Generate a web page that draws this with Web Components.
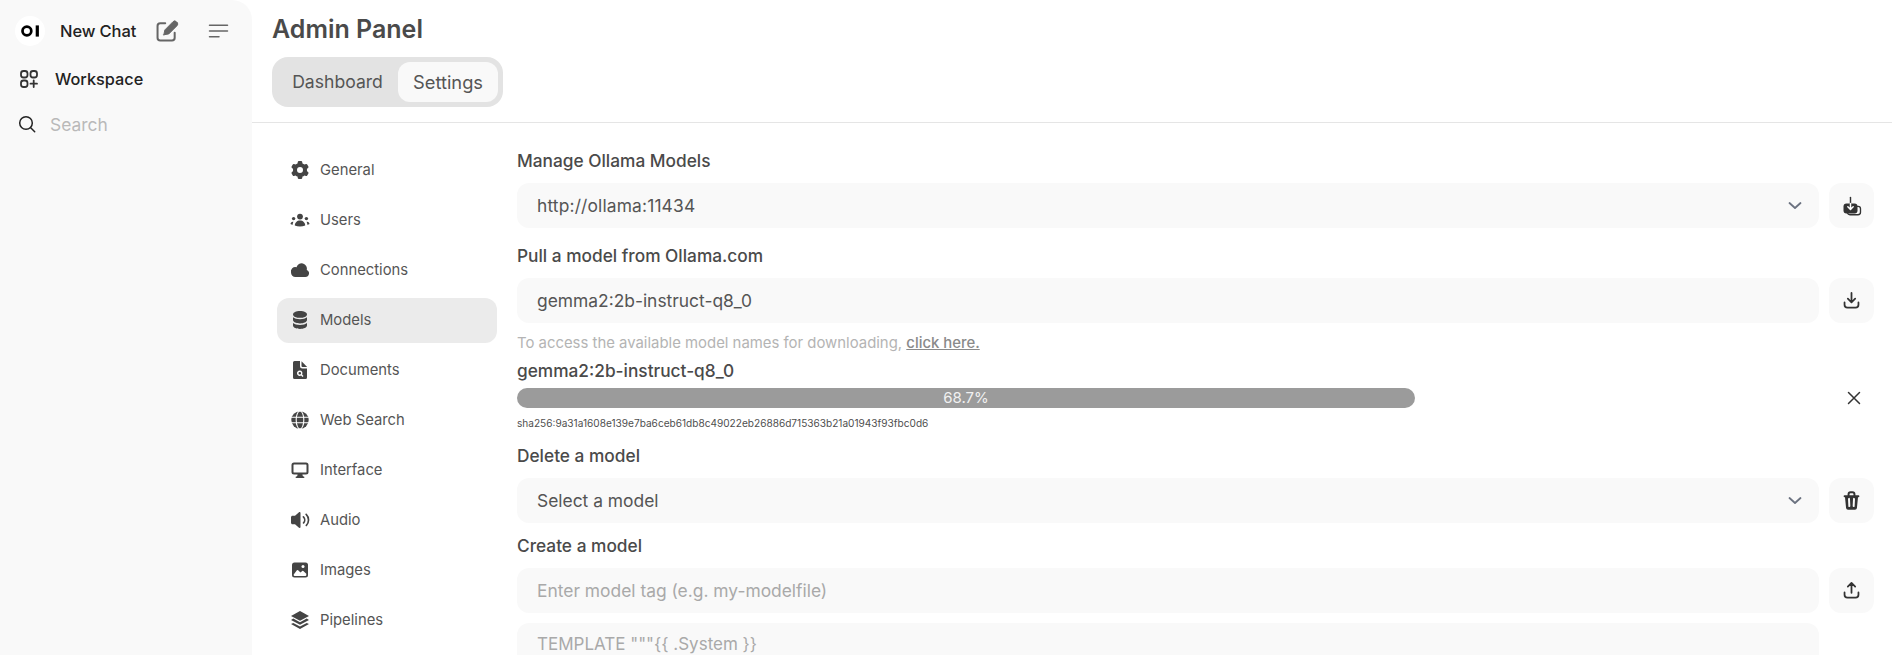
<!DOCTYPE html>
<html>
<head>
<meta charset="utf-8">
<title>Admin Panel</title>
<style>
    html, body { margin: 0; height: 100%; overflow: hidden; background: #fff; }
    body { font-family: Inter, "Noto Sans", sans-serif; color: #4a4a4a; }
</style>
</head>
<body>

<admin-app>
    <app-sidebar slot="sidebar"></app-sidebar>
    <admin-header slot="header"></admin-header>
    <settings-nav slot="nav">
        <nav-item label="General" icon="cog"></nav-item>
        <nav-item label="Users" icon="users"></nav-item>
        <nav-item label="Connections" icon="cloud"></nav-item>
        <nav-item label="Models" icon="database" active></nav-item>
        <nav-item label="Documents" icon="doc"></nav-item>
        <nav-item label="Web Search" icon="globe"></nav-item>
        <nav-item label="Interface" icon="monitor"></nav-item>
        <nav-item label="Audio" icon="speaker"></nav-item>
        <nav-item label="Images" icon="photo"></nav-item>
        <nav-item label="Pipelines" icon="stack"></nav-item>
    </settings-nav>
    <models-panel slot="content"></models-panel>
</admin-app>

<script>
const icons = {
    cog: '<svg viewBox="0 0 20 20" fill="currentColor"><path fill-rule="evenodd" clip-rule="evenodd" d="M7.84 1.804A1 1 0 0 1 8.82 1h2.36a1 1 0 0 1 .98.804l.331 1.652a6.993 6.993 0 0 1 1.929 1.115l1.598-.54a1 1 0 0 1 1.186.447l1.18 2.044a1 1 0 0 1-.205 1.251l-1.267 1.113a7.047 7.047 0 0 1 0 2.228l1.267 1.113a1 1 0 0 1 .206 1.25l-1.18 2.045a1 1 0 0 1-1.187.447l-1.598-.54a6.993 6.993 0 0 1-1.929 1.115l-.33 1.652a1 1 0 0 1-.98.804H8.82a1 1 0 0 1-.98-.804l-.331-1.652a6.993 6.993 0 0 1-1.929-1.115l-1.598.54a1 1 0 0 1-1.186-.447l-1.18-2.044a1 1 0 0 1 .205-1.251l1.267-1.114a7.05 7.05 0 0 1 0-2.227L1.821 7.773a1 1 0 0 1-.206-1.25l1.18-2.045a1 1 0 0 1 1.187-.447l1.598.54A6.992 6.992 0 0 1 7.51 3.456l.33-1.652ZM10 13a3 3 0 1 0 0-6 3 3 0 0 0 0 6Z"/></svg>',
    users: '<svg viewBox="0 0 20 20" fill="currentColor"><circle cx="10" cy="6.6" r="2.9"/><circle cx="3.6" cy="8.6" r="1.7"/><circle cx="16.4" cy="8.6" r="1.7"/><path d="M4.8 15.6c0-3.2 2.3-5.2 5.2-5.2s5.2 2 5.2 5.2c-1.5.7-3.3 1-5.2 1s-3.7-.3-5.2-1Z"/><path d="M3.4 11.7c-.5 1-.7 1.9-.7 3-.9-.1-1.6-.3-2.2-.6 0-1.7 1.2-2.7 2.9-2.4ZM16.6 11.7c.5 1 .7 1.9.7 3 .9-.1 1.6-.3 2.2-.6 0-1.7-1.2-2.7-2.9-2.4Z"/></svg>',
    cloud: '<svg viewBox="0 0 20 20" fill="currentColor"><path d="M1 12.6A4.4 4.4 0 0 0 5.4 17H15.3a3.7 3.7 0 0 0 1.5-7.1 5.3 5.3 0 0 0-10.3-2.6A4.4 4.4 0 0 0 1 12.6Z"/></svg>',
    database: '<svg viewBox="0 0 20 20" fill="currentColor"><path d="M10 1c3.900 0 7 1.500 7 3.400S13.900 7.800 10 7.800 3 6.300 3 4.400 6.100 1 10 1Z"/><path d="M3 7.300c1.500 1.300 4 2 7 2s5.500-.7 7-2v2.700c0 1.900-3.100 3.400-7 3.400S3 11.900 3 10V7.300Z"/><path d="M3 12.900c1.500 1.300 4 2 7 2s5.500-.7 7-2v2.700c0 1.900-3.100 3.400-7 3.400s-7-1.500-7-3.400v-2.700Z"/></svg>',
    doc: '<svg viewBox="0 0 20 20" fill="currentColor"><path fill-rule="evenodd" clip-rule="evenodd" d="M4.5 1A1.500 1.500 0 0 0 3 2.500v15A1.500 1.500 0 0 0 4.500 19h11a1.500 1.500 0 0 0 1.500-1.500V8.500h-4.500A2.500 2.500 0 0 1 10 6V1H4.500ZM9.800 10.500a2.700 2.700 0 1 0 1.300 5l1.400 1.400 1-1-1.400-1.400a2.700 2.700 0 0 0-2.300-4Zm0 1.400a1.300 1.300 0 1 1 0 2.600 1.300 1.300 0 0 1 0-2.600Z"/><path d="M11.500 1.300V6a1 1 0 0 0 1 1h4.700l-5.700-5.700Z"/></svg>',
    globe: '<svg viewBox="0 0 20 20"><circle cx="10" cy="10" r="8.700" fill="currentColor"/><g fill="none" stroke="#fff" stroke-width="1.100"><ellipse cx="10" cy="10" rx="3.800" ry="9"/><path d="M1 7.200h18M1 12.800h18"/></g></svg>',
    monitor: '<svg viewBox="0 0 20 20" fill="currentColor"><path fill-rule="evenodd" clip-rule="evenodd" d="M4 2.500A2.500 2.500 0 0 0 1.500 5v7A2.500 2.500 0 0 0 4 14.500h3.600l-.3 1.200c-.1.400-.5.800-1 .8a.75.75 0 0 0 0 1.500h7.400a.75.75 0 0 0 0-1.500c-.5 0-.9-.4-1-.8l-.3-1.200H16a2.500 2.500 0 0 0 2.500-2.500V5A2.500 2.500 0 0 0 16 2.500H4Zm0 2h12a.5.5 0 0 1 .5.500v7a.5.5 0 0 1-.5.500H4a.5.5 0 0 1-.5-.5V5a.5.5 0 0 1 .5-.5Z"/></svg>',
    speaker: '<svg viewBox="0 0 20 20" fill="currentColor"><path d="M10.500 3c0-.8-.9-1.200-1.500-.7L5 5.800H2.500C1.700 5.800 1 6.500 1 7.300v5.400c0 .8.700 1.500 1.500 1.500H5l4 3.500c.6.500 1.500.1 1.500-.7V3Z"/><path d="M12.800 6.300a.9.900 0 0 1 1.200 0 5.200 5.200 0 0 1 0 7.400.9.900 0 0 1-1.200-1.200 3.500 3.500 0 0 0 0-5 .9.900 0 0 1 0-1.200Z"/><path d="M15.600 3.800a.9.900 0 0 1 1.200 0 8.800 8.800 0 0 1 0 12.400.9.900 0 0 1-1.200-1.200 7 7 0 0 0 0-10 .9.900 0 0 1 0-1.200Z"/></svg>',
    photo: '<svg viewBox="0 0 20 20"><rect x="2" y="2.500" width="16" height="15" rx="2.500" fill="currentColor"/><path fill="#fff" d="M3.700 14.600V15a1 1 0 0 0 1 1h10.600a1 1 0 0 0 1-1v-1.300l-3-2.800a.8.8 0 0 0-1.100 0l-1.700 1.600-2.400-2.300a.9.9 0 0 0-1.200 0l-3.200 4.400Z"/><circle cx="13" cy="6.500" r="1.500" fill="#fff"/></svg>',
    stack: '<svg viewBox="0 0 20 20" fill="currentColor"><path d="M10 1 1 5.900l9 4.900 9-4.900L10 1Z"/><path d="M3.300 8.600 1 9.900l9 4.900 9-4.900-2.300-1.300L10 12.300 3.300 8.600Z"/><path d="M3.300 12.900 1 14.100 10 19l9-4.900-2.300-1.200L10 16.500l-6.700-3.600Z"/></svg>'
};

const actionIcons = {
    pullFrom: '<svg viewBox="0 0 24 24" width="20" height="20" fill="none"><path d="M18 12.500h1.400a2.800 2.800 0 0 1 2.800 2.800v4.200a3 3 0 0 1-3 3H9.500a3.200 3.200 0 0 1-3-2.300" stroke="currentColor" stroke-width="1.600"/><rect x="1.800" y="9" width="16.800" height="12" rx="3.500" fill="currentColor"/><path d="M10.200 1.800V9" stroke="currentColor" stroke-width="1.700" stroke-linecap="round"/><path d="M10.200 9v7M7 13l3.200 3.200 3.200-3.200" stroke="#fff" stroke-width="1.800" stroke-linecap="round" stroke-linejoin="round"/></svg>',
    download: '<svg viewBox="0 0 16 16" width="21" height="21" fill="none" stroke="currentColor" stroke-width="1.350" stroke-linecap="round" stroke-linejoin="round"><path d="M8 2.200v7.100M5.200 6.600 8 9.400l2.800-2.800"/><path d="M2.700 9.500v1.800a2.200 2.200 0 0 0 2.200 2.200h6.200a2.200 2.200 0 0 0 2.200-2.200V9.500"/></svg>',
    upload: '<svg viewBox="0 0 16 16" width="21" height="21" fill="none" stroke="currentColor" stroke-width="1.350" stroke-linecap="round" stroke-linejoin="round"><path d="M8 9.800V2.200M5.200 5 8 2.200 10.800 5"/><path d="M2.700 9.500v1.800a2.200 2.200 0 0 0 2.200 2.200h6.200a2.200 2.200 0 0 0 2.200-2.200V9.500"/></svg>',
    trash: '<svg viewBox="0 0 16 16" width="21" height="21" fill="currentColor"><path fill-rule="evenodd" clip-rule="evenodd" d="M5 3.250V4H2.750a.75.75 0 0 0 0 1.500h.3l.815 8.150A1.500 1.500 0 0 0 5.357 15h5.285a1.500 1.500 0 0 0 1.493-1.350l.815-8.150h.3a.75.75 0 0 0 0-1.500H11v-.75A2.250 2.250 0 0 0 8.750 1h-1.500A2.250 2.250 0 0 0 5 3.250Zm2.250-.75a.75.75 0 0 0-.75.750V4h3v-.75a.75.75 0 0 0-.75-.75h-1.500ZM6.050 6a.75.75 0 0 1 .787.713l.275 5.500a.75.75 0 0 1-1.498.075l-.275-5.500A.75.75 0 0 1 6.050 6Zm3.900 0a.75.75 0 0 1 .712.787l-.275 5.500a.75.750 0 0 1-1.498-.075l.275-5.500A.75.75 0 0 1 9.950 6Z"/></svg>'
};

class AdminApp extends HTMLElement {
    constructor() {
        super();
        this.attachShadow({ mode: 'open' });
        this.shadowRoot.innerHTML = `
            <style>
                :host { display: flex; height: 655px; overflow: hidden; }
                .main { flex: 1; min-width: 0; display: flex; flex-direction: column; }
                .body { display: flex; flex: 1; min-height: 0; padding: 25px 18px 0 25px; gap: 20px; overflow: hidden; }
                ::slotted([slot="content"]) { flex: 1; min-width: 0; }
            </style>
            <slot name="sidebar"></slot>
            <div class="main">
                <slot name="header"></slot>
                <div class="body">
                    <slot name="nav"></slot>
                    <slot name="content"></slot>
                </div>
            </div>
        `;
    }
}

class AppSidebar extends HTMLElement {
    constructor() {
        super();
        this.attachShadow({ mode: 'open' });
        this.shadowRoot.innerHTML = `
            <style>
                :host { display: block; width: 252px; flex: none; height: 655px; background: #f9f9f9; border-radius: 0 20px 0 0; box-sizing: border-box; padding: 16px 0 0 15px; }
                .top { display: flex; align-items: center; height: 30px; }
                .logo { width: 30px; height: 30px; border-radius: 50%; background: #fff; display: flex; align-items: center; justify-content: center; flex: none; }
                .new { margin-left: 15px; font-size: 16.5px; font-weight: 500; color: #222; letter-spacing: -.1px; width: 93.5px; white-space: nowrap; flex: none; }
                .ic { display: block; flex: none; }
                .menu { margin-left: 27px; }
                .row { display: flex; align-items: center; }
                .work { margin-top: 18px; height: 30px; padding-left: 4px; color: #222; font-size: 16.3px; font-weight: 500; }
                .work span { margin-left: 16px; }
                .search { margin-top: 15px; height: 30px; padding-left: 3px; }
                .search span { margin-left: 14px; font-size: 17.4px; color: #b9b9b9; }
            </style>
            <div class="top">
                <div class="logo">
                    <svg width="18" height="12" viewBox="0 0 18 12"><circle cx="5.900" cy="6" r="4.400" fill="none" stroke="#000" stroke-width="2.700"/><rect x="14.700" y=".4" width="3.200" height="11.200" fill="#000"/></svg>
                </div>
                <div class="new">New Chat</div>
                <svg class="ic" width="26" height="26" viewBox="0 0 22 22" fill="none" stroke="#666" stroke-width="1.700" stroke-linecap="round" stroke-linejoin="round"><path d="M17.500 12.500v4.200a2.300 2.300 0 0 1-2.300 2.300H5.300A2.300 2.300 0 0 1 3 16.700V6.800a2.300 2.300 0 0 1 2.300-2.300h4.200"/><path fill="#666" stroke-width=".8" d="M8.300 14.200l.9-4.100 6.900-7a2 2 0 0 1 2.800 0l.6.600a2 2 0 0 1 0 2.800l-7 7-4.200.7Z"/></svg>
                <svg class="ic menu" width="22" height="22" viewBox="0 0 22 22" fill="none" stroke="#666" stroke-width="1.500" stroke-linecap="round"><path d="M2.500 5.200h18M2.500 11h18M2.500 16.800h9.500"/></svg>
            </div>
            <div class="row work">
                <svg width="20" height="20" viewBox="0 0 20 20" fill="none" stroke="#333" stroke-width="1.800" stroke-linecap="round" stroke-linejoin="round"><rect x="2" y="2" width="6.500" height="6.500" rx="2.500"/><rect x="11.500" y="2" width="6.500" height="6.500" rx="2.500"/><rect x="2" y="11.500" width="6.500" height="6.500" rx="2.500"/><path d="M14.700 11.500v6.500M11.500 14.700H18"/></svg>
                <span>Workspace</span>
            </div>
            <div class="row search">
                <svg width="18" height="18" viewBox="0 0 18 18" fill="none" stroke="#222" stroke-width="1.500" stroke-linecap="round"><circle cx="8" cy="8" r="6.300"/><path d="m12.700 12.700 4 4"/></svg>
                <span>Search</span>
            </div>
        `;
    }
}

class AdminHeader extends HTMLElement {
    constructor() {
        super();
        this.attachShadow({ mode: 'open' });
        this.shadowRoot.innerHTML = `
            <style>
                :host { display: block; height: 123px; box-sizing: border-box; border-bottom: 1px solid #e5e5e5; padding: 13px 0 0 20px; }
                h1 { margin: 0; font-size: 25px; line-height: 32px; font-weight: 600; color: #4a4a4a; }
                .tabs { display: inline-flex; margin-top: 12px; padding: 5px; background: #e3e3e3; border-radius: 16px; }
                .tab { height: 39px; padding-bottom: 1px; display: flex; align-items: center; justify-content: center; border-radius: 12px; color: #555; }
                .tab.dash { width: 121px; font-size: 17.6px; }
                .tab.on { width: 100px; background: #f9f9f9; font-size: 18.3px; }
            </style>
            <h1>Admin Panel</h1>
            <div class="tabs">
                <div class="tab dash">Dashboard</div>
                <div class="tab on">Settings</div>
            </div>
        `;
    }
}

class SettingsNav extends HTMLElement {
    constructor() {
        super();
        this.attachShadow({ mode: 'open' });
        this.shadowRoot.innerHTML = `
            <style>
                :host { display: flex; flex-direction: column; gap: 5px; width: 220px; flex: none; }
            </style>
            <slot></slot>
        `;
    }
}

class NavItem extends HTMLElement {
    constructor() {
        super();
        this.attachShadow({ mode: 'open' });
        this.shadowRoot.innerHTML = `
            <style>
                :host { display: flex; align-items: center; height: 44px; padding: 0 0 1px 13px; border-radius: 12px; font-size: 14.8px; color: #555; }
                :host([active]) { background: #ebebeb; }
                .icon { width: 20px; height: 20px; margin-right: 10px; flex: none; color: #444; }
                .icon svg { display: block; width: 20px; height: 20px; }
            </style>
            <div class="icon"></div>
            <span></span>
        `;
    }
    connectedCallback() {
        this.shadowRoot.querySelector('span').textContent = this.getAttribute('label');
        this.shadowRoot.querySelector('.icon').innerHTML = icons[this.getAttribute('icon')] || '';
    }
}

class FieldBox extends HTMLElement {
    constructor() {
        super();
        this.attachShadow({ mode: 'open' });
        this.shadowRoot.innerHTML = `
            <style>
                :host { display: flex; align-items: center; height: 45px; flex: 1; min-width: 0; box-sizing: border-box; padding: 0 20px; background: #f9f9f9; border-radius: 12px; font-size: 17.4px; color: #555; }
                :host([placeholder]) { color: #a9a9a9; }
                span { flex: 1; }
                svg { display: none; color: #6b7280; }
                :host([select]) svg { display: block; margin-right: -6px; }
            </style>
            <span><slot></slot></span>
            <svg width="20" height="20" viewBox="0 0 20 20" fill="none" stroke="currentColor" stroke-width="1.800" stroke-linecap="round" stroke-linejoin="round"><path d="M4.500 7 10 12l5.500-5"/></svg>
        `;
    }
}

class IconButton extends HTMLElement {
    constructor() {
        super();
        this.attachShadow({ mode: 'open' });
        this.shadowRoot.innerHTML = `
            <style>
                :host { display: flex; align-items: center; justify-content: center; width: 45px; height: 45px; flex: none; background: #f9f9f9; border-radius: 12px; color: #333; }
                svg { display: block; }
            </style>
        `;
    }
    connectedCallback() {
        this.shadowRoot.appendChild(document.createRange().createContextualFragment(actionIcons[this.getAttribute('icon')]));
    }
}

class ModelsPanel extends HTMLElement {
    constructor() {
        super();
        this.attachShadow({ mode: 'open' });
        this.shadowRoot.innerHTML = `
            <style>
                :host { display: block; font-size: 17.3px; padding-top: 2px; }
                .label { font-weight: 500; height: 22px; line-height: 22px; color: #4a4a4a; margin: 0; white-space: nowrap; }
                .row { display: flex; gap: 10px; margin-top: 11px; margin-bottom: 17px; }
                .hint { font-size: 14.9px; line-height: 20px; color: #b4b4b4; margin-top: 10px; }
                .hint a { color: #8a8a8a; font-weight: 500; text-decoration: underline; }
                .prog-name { font-weight: 500; line-height: 20px; margin-top: 8px; color: #4a4a4a; }
                .prog { display: flex; align-items: center; margin-top: 7px; }
                .track { flex: 1; margin-right: 50px; }
                .bar { width: 68.7%; height: 20px; border-radius: 10px; background: #9b9b9b; color: #f1f1f1; font-size: 15px; line-height: 20px; text-align: center; }
                .close { width: 45px; height: 20px; box-sizing: border-box; padding-left: 5px; display: flex; align-items: center; justify-content: center; margin-left: -45px; color: #333; }
                .sha { font-size: 10.1px; line-height: 14px; margin-top: 8px; color: #4f4f4f; margin-bottom: 15px; }
                .tpl { height: 60px; display: block; flex: none; margin-right: 55px; margin-top: 10px; padding-top: 11px; font-size: 17px; }
            </style>
            <div class="label">Manage Ollama Models</div>
            <div class="row">
                <field-box select style="letter-spacing:.15px">http://ollama:11434</field-box>
                <icon-button icon="pullFrom"></icon-button>
            </div>
            <div class="label">Pull a model from Ollama.com</div>
            <div class="row" style="margin-bottom:0">
                <field-box>gemma2:2b-instruct-q8_0</field-box>
                <icon-button icon="download"></icon-button>
            </div>
            <div class="hint">To access the available model names for downloading, <a>click here.</a></div>
            <div class="prog-name">gemma2:2b-instruct-q8_0</div>
            <div class="prog">
                <div class="track"><div class="bar">68.7%</div></div>
                <div class="close"><svg width="16" height="16" viewBox="0 0 16 16" fill="none" stroke="currentColor" stroke-width="1.500" stroke-linecap="round"><path d="m2.500 2.500 11 11M13.500 2.500l-11 11"/></svg></div>
            </div>
            <div class="sha">sha256:9a31a1608e139e7ba6ceb61db8c49022eb26886d715363b21a01943f93fbc0d6</div>
            <div class="label">Delete a model</div>
            <div class="row" style="margin-bottom:12px">
                <field-box select>Select a model</field-box>
                <icon-button icon="trash"></icon-button>
            </div>
            <div class="label">Create a model</div>
            <div class="row" style="margin-bottom:0">
                <field-box placeholder>Enter model tag (e.g. my-modelfile)</field-box>
                <icon-button icon="upload"></icon-button>
            </div>
            <field-box class="tpl" placeholder>TEMPLATE """{{ .System }}</field-box>
        `;
    }
}

customElements.define('admin-app', AdminApp);
customElements.define('app-sidebar', AppSidebar);
customElements.define('admin-header', AdminHeader);
customElements.define('settings-nav', SettingsNav);
customElements.define('nav-item', NavItem);
customElements.define('field-box', FieldBox);
customElements.define('icon-button', IconButton);
customElements.define('models-panel', ModelsPanel);
</script>
</body>
</html>
